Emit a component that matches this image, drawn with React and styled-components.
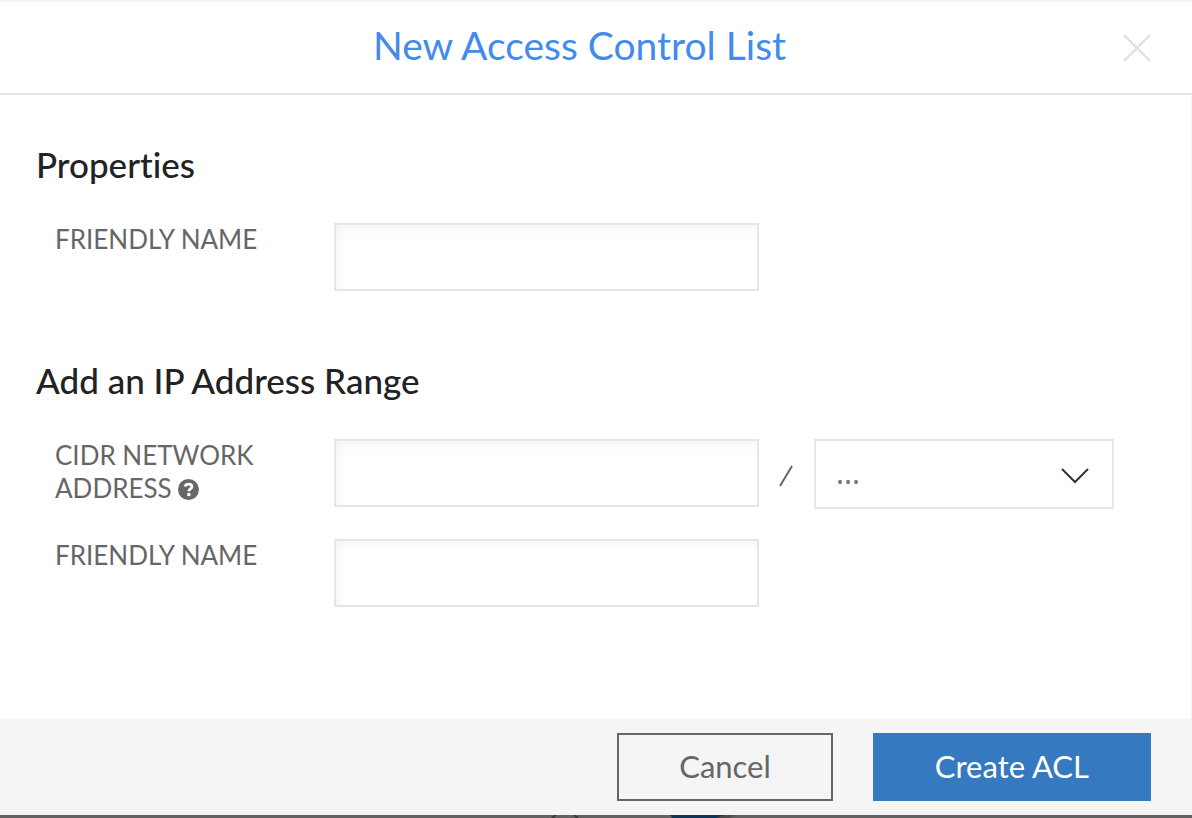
import React from "react";
import styled, { createGlobalStyle } from "styled-components";

export default function App() {
    return (
        <>
            <GlobalStyle />
            <Dialog role="dialog" aria-labelledby="acl-title">
                <Header>
                    <Title id="acl-title">New Access Control List</Title>
                    <Close type="button" aria-label="Close">
                        <svg width="28" height="28" viewBox="0 0 28 28">
                            <path d="M1 1L27 27M27 1L1 27" />
                        </svg>
                    </Close>
                </Header>
                <Body>
                    <Section>
                        <Heading>Properties</Heading>
                        <Row>
                            <Label htmlFor="acl-name">Friendly Name</Label>
                            <Input id="acl-name" type="text" />
                        </Row>
                    </Section>
                    <Section>
                        <Heading>Add an IP Address Range</Heading>
                        <Row>
                            <Label htmlFor="cidr">
                                CIDR Network Address <HelpIcon />
                            </Label>
                            <Input id="cidr" type="text" />
                            <Slash viewBox="0 0 14 22" aria-hidden="true">
                                <path d="M1 21L13 1" />
                            </Slash>
                            <SelectBox>
                                <Select aria-label="Prefix length" defaultValue="">
                                    <option value="">...</option>
                                    <option value="24">24</option>
                                    <option value="32">32</option>
                                </Select>
                                <Chevron viewBox="0 0 28 16" aria-hidden="true">
                                    <path d="M1 1L14 14L27 1" />
                                </Chevron>
                            </SelectBox>
                        </Row>
                        <Row>
                            <Label htmlFor="ip-name">Friendly Name</Label>
                            <Input id="ip-name" type="text" />
                        </Row>
                    </Section>
                </Body>
                <Footer>
                    <Button type="button">Cancel</Button>
                    <Button type="button" $primary>
                        Create ACL
                    </Button>
                </Footer>
            </Dialog>
            <Backdrop viewBox="0 0 1192 3" preserveAspectRatio="xMidYMin slice" aria-hidden="true">
                <rect width="1192" height="3" fill="#636363" />
                <path d="M552 3L556 0M578 3L574 0" stroke="#3c3c3c" strokeWidth="2" />
                <path d="M670 0H728L716 3H672Z" fill="#0d3558" />
                <path d="M724 0H736L728 3H716Z" fill="#4b4b4b" />
            </Backdrop>
        </>
    );
}

function HelpIcon() {
    return (
        <Help viewBox="0 0 20 20" aria-hidden="true">
            <circle cx="10" cy="10" r="10" fill="#666" />
            <path
                d="M6.7 7.2C7.3 5.6 8.5 4.9 10.1 4.9C12 4.9 13.2 5.9 13.2 7.4C13.2 9.4 10.3 9.4 10.3 11.7"
                fill="none"
                stroke="#fff"
                strokeWidth="2.7"
            />
            <rect x="8.8" y="13.3" width="3" height="3" fill="#fff" />
        </Help>
    );
}

const GlobalStyle = createGlobalStyle`
    * {
        box-sizing: border-box;
    }

    body {
        margin: 0;
        background-color: #fff;
        font-family: Lato, "Open Sans", sans-serif;
        font-variant-ligatures: none;
        color: #222;
    }

    button, input, select {
        font-family: inherit;
    }
`;

const Dialog = styled.main`
    border-top: 2px solid #f5f5f5;
    background-color: #fff;
`;
const Header = styled.header`
    display: grid;
    grid-template-columns: 1fr 28px;
    align-items: center;
    padding: 0 41px 0 36px;
    border-bottom: 2px solid #e6e6e6;
`;
const Title = styled.h1`
    margin: 0;
    padding: 19px 0 24px;
    font-size: 39px;
    font-weight: 400;
    line-height: 48px;
    text-align: center;
    color: #428bec;
`;
const Close = styled.button`
    display: flex;
    padding: 0;
    border: 0;
    background: none;
    cursor: pointer;

    path {
        stroke: #dedede;
        stroke-width: 2;
    }
`;
const Body = styled.div`
    display: flex;
    flex-direction: column;
    gap: 69px;
    padding: 49px 36px 112px;
    border-right: 1px solid #f5f5f5;
`;
const Section = styled.section`
    display: flex;
    flex-direction: column;
    gap: 30px;
`;
const Heading = styled.h2`
    margin: 0 0 9px;
    font-size: 35px;
    font-weight: 500;
    line-height: 40px;
`;
const Row = styled.div`
    display: grid;
    grid-template-columns: 279px minmax(0, 425px) 55px minmax(0, 300px);
    align-items: start;
    padding-left: 19px;
`;
const Label = styled.label`
    padding-right: 60px;
    font-size: 26px;
    line-height: 33px;
    text-transform: uppercase;
    color: #666;
`;
const Help = styled.svg`
    width: 21px;
    height: 21px;
    vertical-align: -2px;
`;
const Input = styled.input`
    width: 100%;
    height: 68px;
    padding: 0 20px;
    border: 2px solid #e6e6e6;
    border-radius: 0;
    background-color: #fff;
    box-shadow: inset 4px 4px 8px rgba(0, 0, 0, 0.04);
    font-size: 26px;
    color: #222;
`;
const Slash = styled.svg`
    width: 14px;
    height: 22px;
    margin: 4px 2px 0 0;
    align-self: center;
    justify-self: center;
    fill: none;
    stroke: #666;
    stroke-width: 2;
`;
const SelectBox = styled.div`
    display: grid;
    align-items: center;

    > * {
        grid-area: 1 / 1;
    }
`;
const Select = styled.select`
    appearance: none;
    width: 100%;
    height: 70px;
    padding: 0 60px 4px 20px;
    border: 2px solid #e6e6e6;
    border-radius: 0;
    background-color: #fff;
    font-family: "Noto Sans", sans-serif;
    font-size: 30px;
    color: #777;
`;
const Chevron = styled.svg`
    justify-self: end;
    width: 28px;
    height: 16px;
    margin: 4px 25px 0 0;
    pointer-events: none;
    fill: none;
    stroke: #333;
    stroke-width: 2;
`;
const Footer = styled.footer`
    display: flex;
    justify-content: flex-end;
    gap: 40px;
    padding: 14px 41px;
    background-color: #f5f5f5;
`;
const Button = styled.button`
    height: 68px;
    padding: 0 60px 2px;
    border: 2px solid ${(p) => (p.$primary ? "#3579c0" : "#666")};
    background-color: ${(p) => (p.$primary ? "#3579c0" : "transparent")};
    color: ${(p) => (p.$primary ? "#fff" : "#666")};
    font-size: 31px;
    cursor: pointer;
`;
const Backdrop = styled.svg`
    display: block;
    width: 100%;
    height: 3px;
`;
